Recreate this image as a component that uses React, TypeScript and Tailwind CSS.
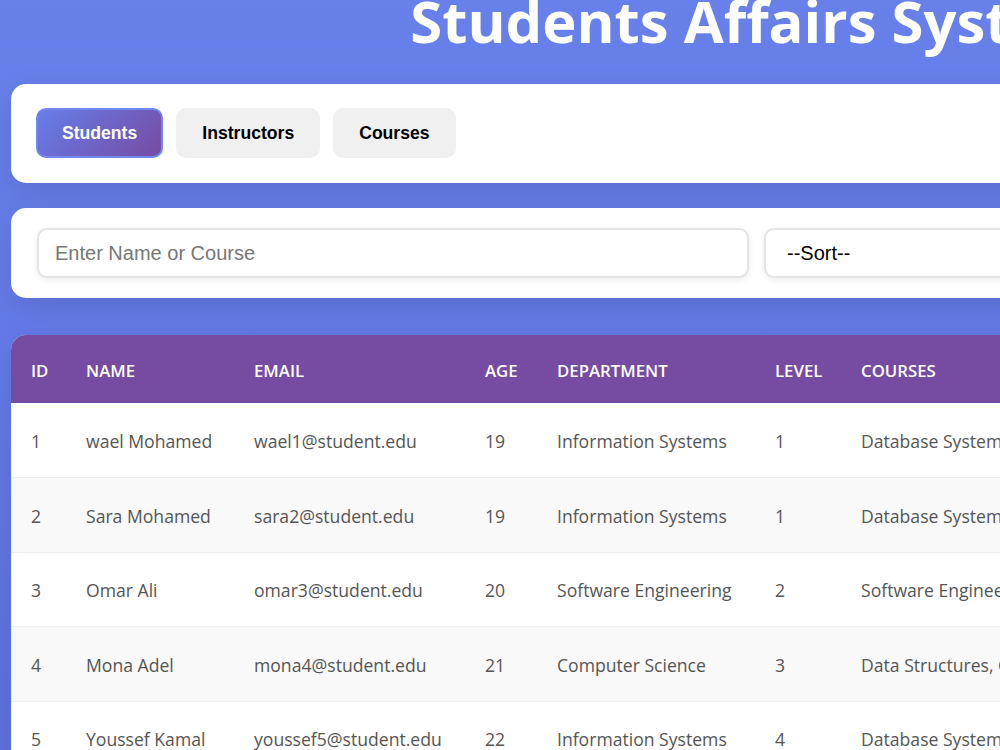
import React from "react";

const students = [
  { id: 1, name: "wael Mohamed", email: "wael1@student.edu", age: 19, dept: "Information Systems", level: 1, courses: "Database Systems, Web Development" },
  { id: 2, name: "Sara Mohamed", email: "sara2@student.edu", age: 19, dept: "Information Systems", level: 1, courses: "Database Systems, Web Development" },
  { id: 3, name: "Omar Ali", email: "omar3@student.edu", age: 20, dept: "Software Engineering", level: 2, courses: "Software Engineering, Algorithms" },
  { id: 4, name: "Mona Adel", email: "mona4@student.edu", age: 21, dept: "Computer Science", level: 3, courses: "Data Structures, Computer Networks" },
  { id: 5, name: "Youssef Kamal", email: "youssef5@student.edu", age: 22, dept: "Information Systems", level: 4, courses: "Database Systems, Data Mining" },
];

export default function App() {
  return (
    <div
      className="w-[1512px] min-h-screen bg-[linear-gradient(180deg,#6780ea_0%,#6479e6_45%,#5d70dc_100%)] px-[11px] pb-10 overflow-hidden"
      style={{ fontFamily: "'Open Sans', 'Noto Sans', sans-serif" }}
    >
      <h1 className="-mt-[9px] mb-[33px] text-center text-[58px] leading-[60px] font-bold text-white">
        Students Affairs System
      </h1>

      <div className="rounded-[15px] bg-white px-[25px] pt-6 pb-[25px] shadow-[0_10px_30px_rgba(0,0,0,0.1)]">
        <div className="flex gap-[13px]" style={{ fontFamily: "'Liberation Sans', Arial, sans-serif" }}>
          <button className="rounded-[10px] border-2 border-[#7088f0] bg-[linear-gradient(135deg,#667eea_0%,#764ba2_100%)] px-[24px] py-[13px] text-[17.6px] leading-[20px] font-bold text-white">
            Students
          </button>
          <button className="rounded-[10px] border-2 border-transparent bg-[#f0f0f0] px-[24px] py-[13px] text-[17.6px] leading-[20px] font-bold text-black">
            Instructors
          </button>
          <button className="rounded-[10px] border-2 border-transparent bg-[#f0f0f0] px-[24px] py-[13px] text-[17.6px] leading-[20px] font-bold text-black">
            Courses
          </button>
        </div>
      </div>

      <div className="mt-[25px] rounded-[15px] bg-white px-[26px] py-5 shadow-[0_10px_30px_rgba(0,0,0,0.1)]">
        <div className="flex gap-[15px]" style={{ fontFamily: "'Liberation Sans', Arial, sans-serif" }}>
          <input
            className="h-[50px] w-[712px] rounded-[10px] border-2 border-[#e4e4e4] bg-white px-4 text-[20px] text-black shadow-[0_2px_6px_rgba(0,0,0,0.08)] outline-none placeholder:text-[#777]"
            placeholder="Enter Name or Course"
          />
          <div className="flex h-[50px] w-[420px] items-center rounded-[10px] border-2 border-[#e4e4e4] bg-white px-[21px] text-[20px] text-black shadow-[0_2px_6px_rgba(0,0,0,0.08)]">
            --Sort--
          </div>
        </div>
      </div>

      <div className="mt-[37px] overflow-hidden rounded-t-[15px] bg-white shadow-[0_10px_30px_rgba(0,0,0,0.1)]">
        <table className="w-full table-fixed border-collapse text-left">
          <thead>
            <tr className="h-[68px] bg-[#764ba2] text-[16.8px] uppercase text-white">
              <th className="w-[55px] px-5 pt-1 font-semibold">ID</th>
              <th className="w-[168px] px-5 pt-1 font-semibold">Name</th>
              <th className="w-[231px] px-5 pt-1 font-semibold">Email</th>
              <th className="w-[72px] px-5 pt-1 font-semibold">Age</th>
              <th className="w-[218px] px-5 pt-1 font-semibold">Department</th>
              <th className="w-[86px] px-5 pt-1 font-semibold">Level</th>
              <th className="w-[380px] px-5 pt-1 font-semibold">Courses</th>
              <th className="px-5 pt-1 font-semibold">Actions</th>
            </tr>
          </thead>
          <tbody className="text-[17.6px] text-[#555]">
            {students.map((s, i) => (
              <tr
                key={s.id}
                className={`h-[74.5px] border-b border-[#eeeeee] ${i % 2 === 1 ? "bg-[#f9f9f9]" : "bg-white"}`}
              >
                <td className="px-5 pt-[2px] whitespace-nowrap">{s.id}</td>
                <td className="px-5 pt-[2px] whitespace-nowrap">{s.name}</td>
                <td className="px-5 pt-[2px] whitespace-nowrap">{s.email}</td>
                <td className="px-5 pt-[2px] whitespace-nowrap">{s.age}</td>
                <td className="px-5 pt-[2px] whitespace-nowrap">{s.dept}</td>
                <td className="px-5 pt-[2px] whitespace-nowrap">{s.level}</td>
                <td className="px-5 pt-[2px] whitespace-nowrap">{s.courses}</td>
                <td className="px-5 pt-[2px] whitespace-nowrap">
                  <span className="mr-2 rounded-md bg-[#667eea] px-3 py-1 text-sm text-white">Edit</span>
                  <span className="rounded-md bg-[#e74c3c] px-3 py-1 text-sm text-white">Delete</span>
                </td>
              </tr>
            ))}
          </tbody>
        </table>
      </div>
    </div>
  );
}
